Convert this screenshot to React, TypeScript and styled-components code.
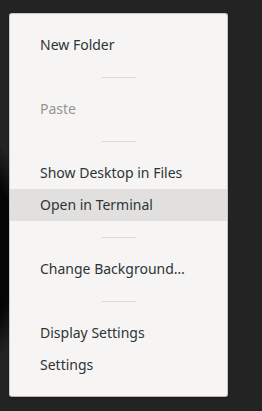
import styled, { createGlobalStyle } from 'styled-components';

const GlobalStyle = createGlobalStyle`
  html, body {
    margin: 0;
    padding: 0;
    height: 100%;
  }

  body {
    background: #242424;
    overflow: hidden;
  }
`;

const Desktop = styled.div`
  width: 262px;
  height: 411px;
  padding: 13px 0 0 9px;
  box-sizing: border-box;
  background:
    radial-gradient(ellipse 60px 120px at -28px 250px, #050505 70%, rgba(5, 5, 5, 0) 100%),
    #232323;
`;

const Menu = styled.ul`
  width: 219px;
  margin: 0;
  padding: 15px 0;
  list-style: none;
  box-sizing: border-box;
  background: #f6f5f4;
  border: 1px solid #cdc7c2;
  border-bottom-color: #b9b3ae;
  border-radius: 3px;
  box-shadow: 0 1px 2px rgba(0, 0, 0, 0.3);
  font-family: 'Noto Sans', 'DejaVu Sans', sans-serif;
  font-size: 14px;
`;

const Item = styled.li<{ $disabled?: boolean; $hover?: boolean }>`
  height: 32px;
  display: flex;
  align-items: center;
  padding: 0 0 2px 30px;
  box-sizing: border-box;
  color: ${(p) => (p.$disabled ? '#929595' : '#2e3436')};
  background: ${(p) => (p.$hover ? '#e1e0de' : 'transparent')};
  white-space: nowrap;
`;

const Separator = styled.li`
  height: 32px;
  display: flex;
  align-items: center;
  justify-content: center;

  &::before {
    content: '';
    width: 34px;
    height: 1px;
    background: #dcdad7;
  }
`;

type Entry = { label?: string; disabled?: boolean; hover?: boolean };

const entries: Entry[] = [
  { label: 'New Folder' },
  {},
  { label: 'Paste', disabled: true },
  {},
  { label: 'Show Desktop in Files' },
  { label: 'Open in Terminal', hover: true },
  {},
  { label: 'Change Background…' },
  {},
  { label: 'Display Settings' },
  { label: 'Settings' },
];

const App = () => {
  return (
    <>
      <GlobalStyle />
      <Desktop>
        <Menu>
          {entries.map((el, i) =>
            el.label ? (
              <Item key={i} $disabled={el.disabled} $hover={el.hover}>
                {el.label}
              </Item>
            ) : (
              <Separator key={i} />
            )
          )}
        </Menu>
      </Desktop>
    </>
  );
};

export default App;
